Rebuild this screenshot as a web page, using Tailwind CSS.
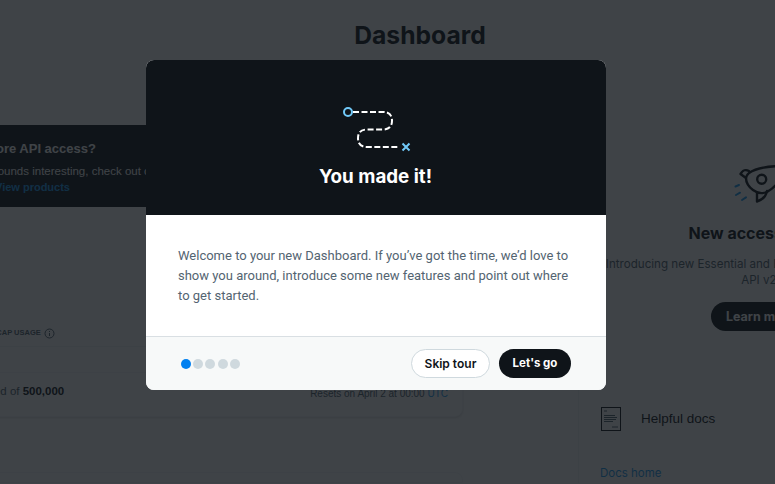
<!DOCTYPE html>
<html lang="en">
<head>
    <meta charset="UTF-8">
    <title>Dashboard</title>
    <script src="https://cdn.jsdelivr.net/npm/@tailwindcss/browser@4"></script>
</head>
<body class="bg-white h-[484px] overflow-hidden relative font-['Inter',sans-serif] text-[#0f1419]">
    <!-- Page behind the tour -->
    <div class="w-[1060px] -ml-[118px]">
        <h1 class="text-center text-[24.7px] leading-[32px] font-bold pt-[19px] h-[125px] pl-[16px]">Dashboard</h1>
        <div class="flex gap-[115px]">
            <div class="w-[581px]">
                <div class="bg-[#0f1419] h-[82px] text-white font-['Liberation_Sans',sans-serif]">
                    <h3 class="pl-[67px] pt-[15px] text-[13px] leading-[18px] font-bold whitespace-nowrap">Need more API access?</h3>
                    <p class="pl-[108px] mt-[5px] text-[11.5px] leading-[16px] whitespace-nowrap">Sounds interesting, check out our products</p>
                    <a class="block pl-[113px] text-[11px] leading-[16px] font-bold text-[#1d9bf0]">View products</a>
                </div>
                <div class="mt-[115px] h-[25px] pb-[2px] border-b border-[#eff3f4] flex items-center">
                    <span class="pl-[86px] text-[7.5px] font-bold uppercase text-[#536471] font-['Liberation_Sans',sans-serif] whitespace-nowrap">Tweet cap usage</span>
                    <svg class="ml-[3px]" width="11" height="11" viewBox="0 0 11 11" fill="none" stroke="#536471"><circle cx="5.5" cy="5.5" r="4.5"/><path d="M5.5 5v3M5.5 3v1"/></svg>
                </div>
                <div class="mt-[25px] h-[45px] bg-white border border-[#f4f6f7] rounded-lg shadow-sm pt-[10px] pl-[44px] pr-[14px] flex justify-between items-start font-['Liberation_Sans',sans-serif] text-[#536471]">
                    <span class="text-[11.5px] leading-[16px] whitespace-nowrap">0 Tweets pulled of <b class="font-semibold text-[#0f1419]">500,000</b></span>
                    <span class="text-[10px] leading-[21px] whitespace-nowrap">Resets on April 2 at 00:00 <span class="text-[#1d9bf0]">UTC</span></span>
                </div>
                <div class="mt-[55px] h-[11px] bg-white border border-[#f4f6f7] rounded-t-lg"></div>
            </div>
            <div class="w-[364px] border-l border-[#eff3f4]">
                <div class="flex justify-center pt-[40px]">
                    <svg width="70" height="42" viewBox="0 0 70 42" fill="none" stroke="#0f1419" stroke-width="2.4" stroke-linejoin="round" stroke-linecap="round">
                        <path d="M23 8C30 3 45 1 58 1 58 12 50 22 41 27 36 29 31 28 27 25 23 22 20 17 20 13 20 12 21 10 23 8Z"/>
                        <path d="M23 6C19 4 17 5 14.5 9L20 13"/>
                        <path d="M31 27.5 31 36.5C36 35 40 31 41 26"/>
                        <circle cx="35.7" cy="14.3" r="4.5"/>
                        <path d="M9.5 21.5 13 20M10 30 14 27.7M16 35 20 32.3" stroke="#1d9bf0" stroke-width="2"/>
                    </svg>
                </div>
                <h3 class="mt-[16px] text-center text-[16px] leading-[20px] font-bold">New access levels</h3>
                <p class="mt-[13px] text-center text-[11.6px] leading-[16px] text-[#536471] whitespace-nowrap">Introducing new Essential and Elevated access levels for<br>API v2.</p>
                <div class="flex justify-center mt-[14px]">
                    <a class="bg-[#0f1419] text-white text-[12.5px] font-bold rounded-full h-[29px] w-[99px] text-center leading-[29px]">Learn more</a>
                </div>
                <div class="mt-[76px] ml-[22px] flex items-center gap-[19px]">
                    <svg width="21" height="25" viewBox="0 0 21 25" fill="none"><rect x="0.5" y="0.5" width="19" height="23" stroke="#0f1419"/><path d="M3 4h3M3 8.5h11M3 10.5h13M3 12.5h12M3 14.5h9M11 20h6" stroke="#536471"/></svg>
                    <h4 class="text-[13.5px] font-['Liberation_Sans',sans-serif] font-medium">Helpful docs</h4>
                </div>
                <a class="block mt-[33px] ml-[21px] text-[11.5px] leading-[16px] text-[#1d9bf0]">Docs home</a>
            </div>
        </div>
    </div>

    <!-- Overlay -->
    <div class="absolute inset-0 bg-[#0f1419]/80"></div>

    <!-- Tour modal -->
    <div class="absolute left-[146px] top-[60px] w-[460px] h-[330px] rounded-lg overflow-hidden bg-white flex flex-col">
        <div class="bg-[#0f1419] h-[155px] flex flex-col items-center">
            <svg class="mt-[40px] -ml-[1px]" width="80" height="60" viewBox="0 0 80 60" fill="none">
                <path d="M17 12H47Q56 12 56 20.7T47 29.5H31Q22 29.5 22 38.2T31 47H63" stroke="#fff" stroke-width="2" stroke-dasharray="6 2.5"/>
                <circle cx="12" cy="12" r="4" stroke="#71c9f8" stroke-width="2"/>
                <path d="M66.5 43.5L73.5 50.5M73.5 43.5L66.5 50.5" stroke="#71c9f8" stroke-width="2"/>
            </svg>
            <h2 class="mt-[5px] text-white text-[18.8px] leading-[24px] font-bold -ml-[1px]">You made it!</h2>
        </div>
        <div class="flex-1 px-[32px] pt-[31px] text-[13px] leading-[20px] text-[#536471] font-['Roboto',sans-serif]">
            Welcome to your new Dashboard. If you’ve got the time, we’d love to show you around, introduce some new features and point out where to get started.
        </div>
        <div class="h-[54px] border-t border-[#d9dfe3] bg-[#f7f9f9] flex items-center pl-[35px] pr-[35px]">
            <div class="flex gap-[2.2px]">
                <span class="w-[10px] h-[10px] rounded-full bg-[#0080f0]"></span>
                <span class="w-[10px] h-[10px] rounded-full bg-[#cfd9de]"></span>
                <span class="w-[10px] h-[10px] rounded-full bg-[#cfd9de]"></span>
                <span class="w-[10px] h-[10px] rounded-full bg-[#cfd9de]"></span>
                <span class="w-[10px] h-[10px] rounded-full bg-[#cfd9de]"></span>
            </div>
            <div class="ml-auto flex items-center gap-[9px]">
                <button class="h-[29px] w-[79px] rounded-full bg-white border border-[#cfd9de] text-[12px] font-semibold text-[#0f1419]">Skip tour</button>
                <button class="h-[29px] w-[72px] rounded-full bg-[#0f1419] text-[11.5px] font-bold text-white">Let's go</button>
            </div>
        </div>
    </div>
</body>
</html>
